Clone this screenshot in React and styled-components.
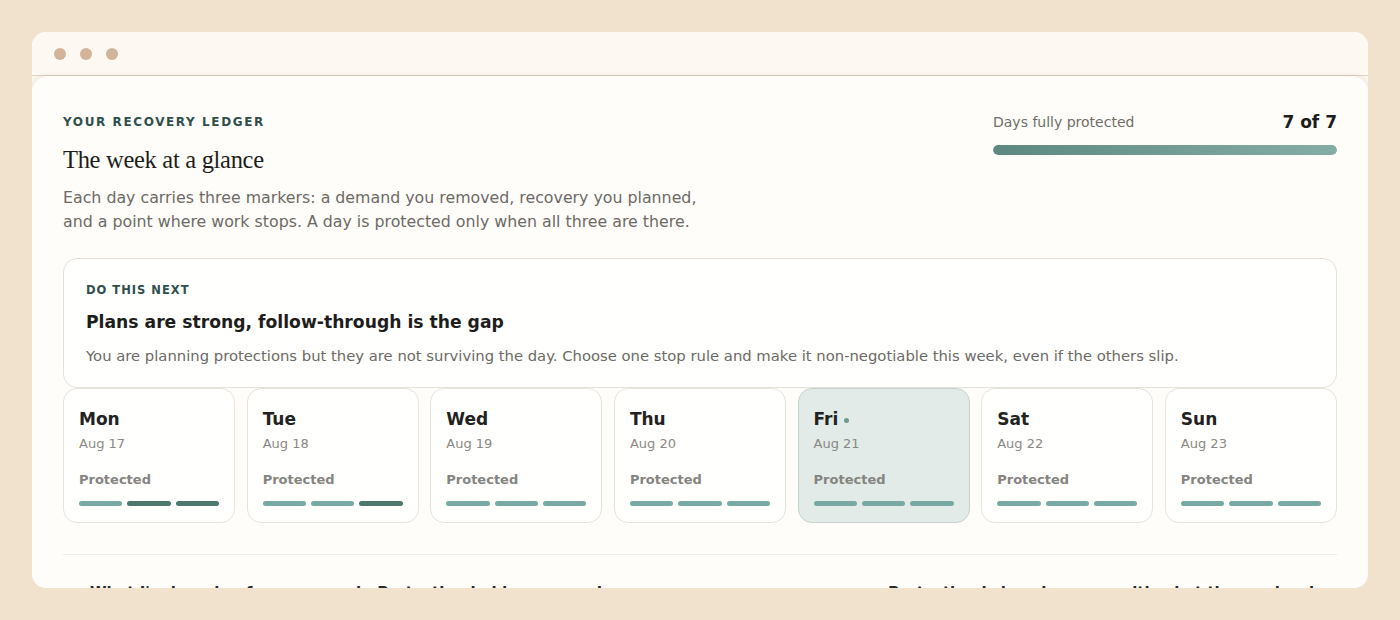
import React from "react";
import styled, { createGlobalStyle } from "styled-components";

const Global = createGlobalStyle`
  html, body { margin: 0; padding: 0; }
  body {
    background: #f0e2cd;
    font-family: "DejaVu Sans", "Noto Sans", sans-serif;
    -webkit-font-smoothing: antialiased;
  }
`;

const Page = styled.div`
  padding: 32px;
  box-sizing: border-box;
  width: 1400px;
  height: 620px;
`;

const Window = styled.div`
  height: 556px;
  background: #fbf6ee;
  border-radius: 14px;
  overflow: hidden;
  display: flex;
  flex-direction: column;
`;

const TitleBar = styled.div`
  height: 43px;
  flex: none;
  display: flex;
  align-items: center;
  gap: 14px;
  padding-left: 22px;
  background: #fdf9f2;
  border-bottom: 1px solid #ddd3c2;
`;

const Dot = styled.span`
  width: 12px;
  height: 12px;
  border-radius: 50%;
  background: #d1b49a;
`;

const Panel = styled.div`
  flex: 1;
  background: #fffdfa;
  border-radius: 16px 16px 0 0;
  box-shadow: 0 -1px 4px rgba(120, 100, 70, 0.12);
  padding: 38px 31px 0 31px;
  overflow: hidden;
`;

const Header = styled.div`
  display: flex;
  justify-content: space-between;
  align-items: flex-start;
`;

const Intro = styled.div`
  display: flex;
  flex-direction: column;
`;

const Eyebrow = styled.div`
  font-size: ${(p) => (p.$small ? "11.5px" : "12px")};
  line-height: 16px;
  font-weight: 700;
  letter-spacing: ${(p) => (p.$small ? "1px" : "1.6px")};
  text-transform: uppercase;
  color: #2f4f4c;
`;

const Heading = styled.h1`
  margin: 15px 0 0;
  font-family: "Liberation Serif", "Times New Roman", serif;
  font-weight: 400;
  font-size: 24.5px;
  line-height: 30px;
  color: #1d1d1b;
  letter-spacing: -0.3px;
`;

const Lede = styled.p`
  margin: 11px 0 0;
  font-size: 15.8px;
  line-height: 24px;
  color: #6c6a65;
  max-width: 655px;
`;

const Score = styled.div`
  width: 344px;
  display: flex;
  flex-direction: column;
  margin-top: -2px;
`;

const ScoreRow = styled.div`
  display: flex;
  justify-content: space-between;
  align-items: center;
  height: 20px;
`;

const ScoreLabel = styled.span`
  font-size: 14px;
  color: #6f6d68;
`;

const ScoreValue = styled.span`
  font-size: 17px;
  font-weight: 700;
  color: #1d1d1b;
`;

const Track = styled.div`
  margin-top: 13px;
  height: 10px;
  border-radius: 5px;
  background: #e6ece9;
  overflow: hidden;
`;

const Fill = styled.div`
  height: 100%;
  border-radius: 5px;
  background: linear-gradient(90deg, #5d887f 0%, #84ada6 100%);
`;

const NextCard = styled.section`
  margin-top: 24px;
  background: #fffffe;
  border: 1px solid #e4e1da;
  border-radius: 14px;
  padding: 23px 22px 21px;
`;

const NextTitle = styled.h2`
  margin: 13px 0 0;
  font-size: 17.2px;
  line-height: 22px;
  font-weight: 700;
  color: #1d1d1b;
`;

const NextBody = styled.p`
  margin: 13px 0 0;
  font-size: 14.8px;
  line-height: 20px;
  color: #6c6a65;
`;

const Days = styled.div`
  display: grid;
  grid-template-columns: repeat(7, 1fr);
  gap: 11.5px;
`;

const DayCard = styled.div`
  height: 135px;
  box-sizing: border-box;
  border-radius: 14px;
  border: 1px solid ${(p) => (p.$today ? "#c6d3cc" : "#e6e3dd")};
  background: ${(p) => (p.$today ? "#e2ebe7" : "#fffffe")};
  padding: 19px 15px 0;
  display: flex;
  flex-direction: column;
`;

const DayName = styled.div`
  display: flex;
  align-items: center;
  gap: 6px;
  font-size: 17px;
  line-height: 22px;
  font-weight: 700;
  color: #222220;
`;

const TodayDot = styled.span`
  width: 5px;
  height: 5px;
  border-radius: 50%;
  background: #6f9990;
  margin-top: 3px;
`;

const DayDate = styled.div`
  margin-top: 5px;
  font-size: 13px;
  line-height: 18px;
  color: #8a8883;
`;

const Status = styled.div`
  margin-top: 18px;
  font-size: 13px;
  line-height: 18px;
  font-weight: 700;
  color: #858480;
`;

const Markers = styled.div`
  margin-top: 12px;
  display: grid;
  grid-template-columns: repeat(3, 1fr);
  gap: 5px;
`;

const Marker = styled.span`
  height: 5px;
  border-radius: 3px;
  background: ${(p) => (p.$strong ? "#4e786e" : "#78aaa3")};
`;

const Divider = styled.hr`
  margin: 31px 0 0;
  border: none;
  border-top: 1px solid #ecebe8;
`;

const Footer = styled.div`
  display: flex;
  justify-content: space-between;
  padding: 29px 9px 0 27px;
  font-size: 15px;
  font-weight: 700;
  color: #2a2a28;
`;

const days = [
  { name: "Mon", date: "Aug 17", marks: [false, true, true] },
  { name: "Tue", date: "Aug 18", marks: [false, false, true] },
  { name: "Wed", date: "Aug 19", marks: [false, false, false] },
  { name: "Thu", date: "Aug 20", marks: [false, false, false] },
  { name: "Fri", date: "Aug 21", marks: [false, false, false], today: true },
  { name: "Sat", date: "Aug 22", marks: [false, false, false] },
  { name: "Sun", date: "Aug 23", marks: [false, false, false] },
];

export default function App() {
  return (
    <>
      <Global />
      <Page>
        <Window>
          <TitleBar>
            <Dot />
            <Dot />
            <Dot />
          </TitleBar>
          <Panel>
            <Header>
              <Intro>
                <Eyebrow>Your recovery ledger</Eyebrow>
                <Heading>The week at a glance</Heading>
                <Lede>
                  Each day carries three markers: a demand you removed, recovery you planned,
                  and a point where work stops. A day is protected only when all three are there.
                </Lede>
              </Intro>
              <Score>
                <ScoreRow>
                  <ScoreLabel>Days fully protected</ScoreLabel>
                  <ScoreValue>7 of 7</ScoreValue>
                </ScoreRow>
                <Track>
                  <Fill style={{ width: `${(7 / 7) * 100}%` }} />
                </Track>
              </Score>
            </Header>

            <NextCard>
              <Eyebrow $small>Do this next</Eyebrow>
              <NextTitle>Plans are strong, follow-through is the gap</NextTitle>
              <NextBody>
                You are planning protections but they are not surviving the day. Choose one stop
                rule and make it non-negotiable this week, even if the others slip.
              </NextBody>
            </NextCard>

            <Days>
              {days.map((d) => (
                <DayCard key={d.name} $today={d.today}>
                  <DayName>
                    {d.name}
                    {d.today && <TodayDot />}
                  </DayName>
                  <DayDate>{d.date}</DayDate>
                  <Status>Protected</Status>
                  <Markers>
                    {d.marks.map((m, i) => (
                      <Marker key={i} $strong={m} />
                    ))}
                  </Markers>
                </DayCard>
              ))}
            </Days>

            <Divider />
            <Footer>
              <span>What I'm learning from my week: Protection held on every day</span>
              <span>Protection is keeping pace with what the week asks</span>
            </Footer>
          </Panel>
        </Window>
      </Page>
    </>
  );
}
